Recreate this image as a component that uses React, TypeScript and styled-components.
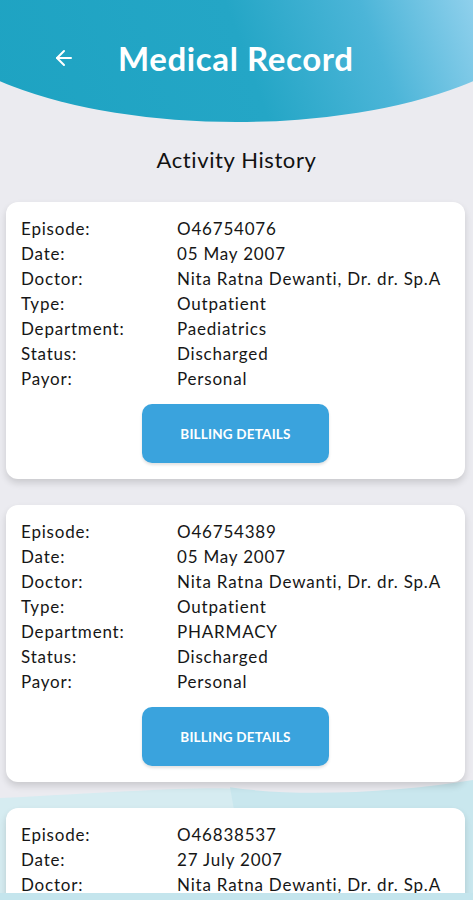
import React from "react";
import styled, { createGlobalStyle } from "styled-components";
import { ArrowLeft } from "lucide-react";

type Episode = {
  episode: string;
  date: string;
  doctor: string;
  type: string;
  department: string;
  status: string;
  payor: string;
};

const episodes: Episode[] = [
  {
    episode: "O46754076",
    date: "05 May 2007",
    doctor: "Nita Ratna Dewanti, Dr. dr. Sp.A",
    type: "Outpatient",
    department: "Paediatrics",
    status: "Discharged",
    payor: "Personal",
  },
  {
    episode: "O46754389",
    date: "05 May 2007",
    doctor: "Nita Ratna Dewanti, Dr. dr. Sp.A",
    type: "Outpatient",
    department: "PHARMACY",
    status: "Discharged",
    payor: "Personal",
  },
  {
    episode: "O46838537",
    date: "27 July 2007",
    doctor: "Nita Ratna Dewanti, Dr. dr. Sp.A",
    type: "Outpatient",
    department: "Paediatrics",
    status: "Discharged",
    payor: "Personal",
  },
];

const GlobalStyle = createGlobalStyle`
  html, body {
    margin: 0;
    padding: 0;
    background: #ebebf0;
  }
  * { box-sizing: border-box; }
`;

export default function App() {
  return (
    <>
      <GlobalStyle />
      <Screen>
        <Backdrop viewBox="0 0 473 200" preserveAspectRatio="none">
          <path d="M0 30 C 120 20, 200 10, 240 15 C 270 60, 380 70, 473 40 L473 200 L0 200 Z" fill="#d6ecf1" />
          <path d="M230 12 C 300 30, 400 20, 473 0 L473 200 L250 200 Z" fill="#c9e7ee" />
        </Backdrop>
        <Header>
          <BackButton>
            <ArrowLeft size={24} strokeWidth={2} />
          </BackButton>
          <Title>Medical Record</Title>
        </Header>
        <SectionTitle>Activity History</SectionTitle>
        <List>
          {episodes.map((e) => (
            <Card key={e.episode}>
              <Rows>
                <Label>Episode:</Label>
                <Value>{e.episode}</Value>
                <Label>Date:</Label>
                <Value>{e.date}</Value>
                <Label>Doctor:</Label>
                <Value>{e.doctor}</Value>
                <Label>Type:</Label>
                <Value>{e.type}</Value>
                <Label>Department:</Label>
                <Value>{e.department}</Value>
                <Label>Status:</Label>
                <Value>{e.status}</Value>
                <Label>Payor:</Label>
                <Value>{e.payor}</Value>
              </Rows>
              <BillingBtn>BILLING DETAILS</BillingBtn>
            </Card>
          ))}
        </List>
        <BottomBand />
      </Screen>
    </>
  );
}

const Screen = styled.div`
  position: relative;
  height: 900px;
  overflow: hidden;
  display: flex;
  flex-direction: column;
  background: #ebebf0;
  font-family: Lato, "Noto Sans", sans-serif;
`;

const Backdrop = styled.svg`
  position: absolute;
  left: 0;
  bottom: 0;
  width: 473px;
  height: 120px;
  z-index: 0;
`;

const Header = styled.header`
  position: relative;
  z-index: 1;
  flex: none;
  height: 122px;
  display: flex;
  align-items: center;
  padding: 0 0 6px 52px;
  background: linear-gradient(250deg, #8fd0ec 0%, #4cb5d8 22%, #24a6c6 48%, #1ea3c2 100%);
  clip-path: ellipse(67% 122px at 50% 0);
`;

const BackButton = styled.button`
  border: 0;
  background: none;
  padding: 0;
  display: flex;
  color: #fff;
  width: 24px;
  height: 24px;
`;

const Title = styled.h1`
  margin: 0 0 0 42px;
  color: #fff;
  font-family: Lato, "Noto Sans", sans-serif;
  font-weight: 700;
  font-size: 33px;
  letter-spacing: 0.6px;
`;

const SectionTitle = styled.h2`
  position: relative;
  z-index: 1;
  margin: 23px 0 0;
  text-align: center;
  font-weight: 400;
  font-size: 22px;
  line-height: 30px;
  letter-spacing: 0.6px;
  color: #111;
`;

const List = styled.div`
  position: relative;
  z-index: 1;
  flex: 1;
  min-height: 0;
  display: flex;
  flex-direction: column;
  gap: 26px;
  padding: 27px 8px 0 6px;
`;

const Card = styled.div`
  flex: none;
  background: #fff;
  border-radius: 12px;
  box-shadow: 0 4px 7px rgba(0, 0, 0, 0.14);
  padding: 14px 15px 16px;
  display: flex;
  flex-direction: column;
  align-items: center;
`;

const Rows = styled.div`
  align-self: stretch;
  display: grid;
  grid-template-columns: 156px 1fr;
  font-size: 17px;
  line-height: 25px;
  letter-spacing: 0.8px;
  color: #161616;
`;

const Label = styled.span``;

const Value = styled.span`
  white-space: nowrap;
`;

const BillingBtn = styled.button`
  margin-top: 13px;
  width: 187px;
  height: 59px;
  border: 0;
  border-radius: 10px;
  background: #3aa3dd;
  box-shadow: 0 2px 3px rgba(0, 0, 0, 0.12);
  color: #fff;
  font-family: Lato, "Noto Sans", sans-serif;
  font-weight: 700;
  font-size: 13.5px;
  letter-spacing: 0.2px;
`;

const BottomBand = styled.div`
  position: absolute;
  left: 0;
  right: 0;
  bottom: 0;
  height: 7px;
  z-index: 2;
  background: #c4e5ed;
`;
